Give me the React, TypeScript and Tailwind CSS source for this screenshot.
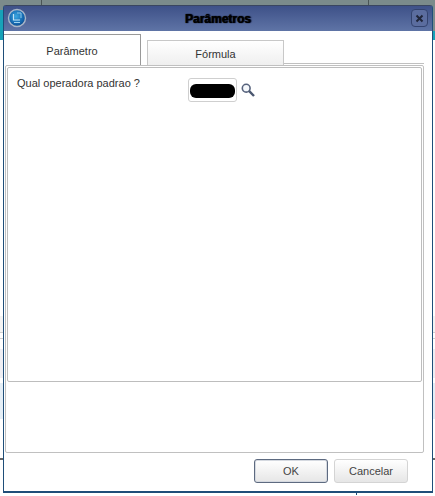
export default function App() {
  return (
    <div className="relative h-[496px] w-[435px] overflow-hidden bg-white font-['Liberation_Sans',Arial,sans-serif]">
      {/* Page behind the dialog */}
      <div className="flex h-full w-full flex-col">
        <div className="flex h-[10px] bg-[#7b8b8b]">
          <div className="w-[42px] border-r border-[#4a5555]" />
          <div className="w-[327px] border-r border-[#4a5555]" />
        </div>
        <div className="flex h-[21px]">
          <div className="w-1/2 bg-[#17a2b8]" />
          <div className="w-1/2 bg-[#7b8b8b]" />
        </div>
        <div className="h-[9px] bg-[#17a2b8]" />
        <div className="h-[276px] bg-white" />
        <div className="h-[17px] border-b border-[#cfcfcf] bg-[#f3f3f3]" />
        <div className="h-[6px] border-b border-[#cfcfcf] bg-white" />
        <div className="h-[10px] bg-white" />
        <div className="h-[29px] bg-[#eeeef3]" />
        <div className="h-[5px] bg-white" />
        <div className="h-[36px] bg-[#e4eef6]" />
        <div className="h-[35px] bg-white" />
        <div className="h-[5px] border-b border-[#666] bg-white" />
        <div className="flex h-[36px] flex-col border-t border-[#666] bg-white">
          <div className="ml-[356px] mt-[31px] h-[4px] w-px bg-[#1f4e79]" />
        </div>
      </div>

      {/* Dialog */}
      <div className="absolute left-[3px] top-[5px] flex h-[488px] w-[430px] flex-col rounded-t-[3px] border border-b-2 border-[#1f4e79] border-t-[#3a4660] bg-white">
        <div className="relative flex h-[25px] shrink-0 items-center justify-center bg-gradient-to-b from-[#3e5188] to-[#5f74a6]">
          <svg className="absolute left-[3px] top-[2px]" width="20" height="20" viewBox="0 0 20 20">
            <defs>
              <radialGradient id="orb" cx="45%" cy="40%" r="60%">
                <stop offset="0%" stopColor="#3aa6e0" />
                <stop offset="70%" stopColor="#1568b0" />
                <stop offset="100%" stopColor="#0d4a8a" />
              </radialGradient>
            </defs>
            <circle cx="10" cy="10" r="8.5" fill="url(#orb)" stroke="#a9b6c8" strokeWidth="1.4" />
            <path d="M6.5 6 V12 H13" fill="none" stroke="#bfe2f5" strokeWidth="1.2" />
            <path d="M10 5 H14 V10" fill="none" stroke="#8cc8ea" strokeWidth="1" />
            <path d="M7 14.5 H13" stroke="#9fd3f0" strokeWidth="1" />
          </svg>
          <span className="text-[12px] font-bold text-black [text-shadow:0_0_1px_#000,1px_0_1px_#10183a]">Parâmetros</span>
          <div className="absolute right-[4px] top-[3px] flex h-[18px] w-[17px] items-center justify-center rounded-[4px] border border-[#33436f] bg-[#5b6d9f]">
            <svg width="9" height="9" viewBox="0 0 9 9">
              <path d="M1.5 1.5 L7.5 7.5 M7.5 1.5 L1.5 7.5" stroke="#20263a" strokeWidth="2" />
            </svg>
          </div>
        </div>

        <div className="flex h-[34px] shrink-0 items-end pt-[4px]">
          <div className="z-10 flex h-[31px] w-[137px] items-center justify-center border-r border-t border-[#999999] bg-white pt-[3px] text-[11px] text-[#333]">Parâmetro</div>
          <div className="ml-[6px] flex h-[25px] w-[137px] items-center justify-center border-x border-t border-[#c8c8c8] bg-gradient-to-b from-white to-[#efefef] pt-[2px] text-[11px] text-[#333]">Fórmula</div>
          <div className="mb-[1px] h-px w-[140px] bg-[#c0c0c0]" />
        </div>

        <div className="ml-px flex h-[388px] w-[419px] shrink-0 flex-col rounded-[2px] border border-[#c0c0c0] bg-white p-px">
          <div className="flex h-[315px] items-start rounded-[2px] border border-[#bdbdbd] bg-white">
            <span className="ml-[9px] mt-[7px] w-[171px] text-[11px] leading-[16px] text-[#333]">Qual operadora padrao ?</span>
            <div className="mt-[10px] flex h-[24px] w-[49px] items-center rounded-[3px] border border-[#cfcfcf] bg-white pl-px pt-[2px]">
              <div className="h-[14px] w-[45px] rounded-[6px] bg-black" />
            </div>
            <svg className="ml-[4px] mt-[15px]" width="14" height="14" viewBox="0 0 14 14">
              <circle cx="5.2" cy="5.2" r="3.9" fill="#f4f7fb" stroke="#56627c" strokeWidth="1.6" />
              <path d="M8.2 8.2 L13 13" stroke="#4a566f" strokeWidth="2.4" />
            </svg>
          </div>
        </div>

        <div className="flex flex-1 justify-end gap-[6px] pr-[24px] pt-[6px]">
          <button className="h-[24px] w-[74px] rounded-[3px] border border-[#5d6a80] bg-gradient-to-b from-white to-[#e6e6e6] text-[11px] text-[#444] shadow-[inset_0_0_0_1px_#d5d9e0]">OK</button>
          <button className="h-[24px] w-[74px] rounded-[3px] border border-[#d4d4d4] bg-gradient-to-b from-white to-[#e6e6e6] text-[11px] text-[#444]">Cancelar</button>
        </div>
      </div>
    </div>
  );
}
